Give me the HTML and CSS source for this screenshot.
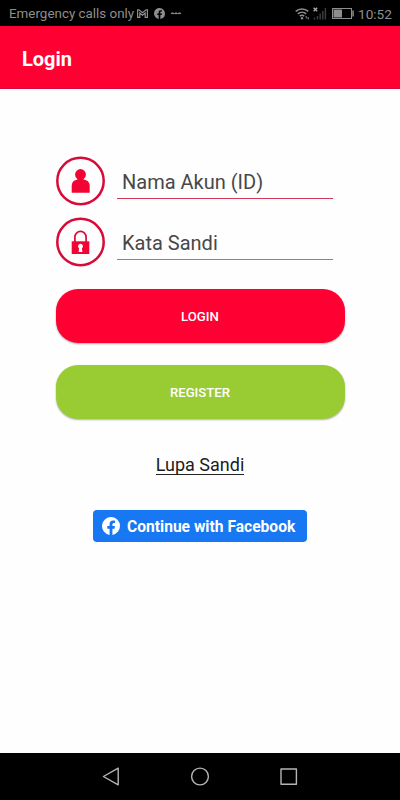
FILE: index.html
```html
<!DOCTYPE html>
<html lang="id">

<head>
    <meta charset="UTF-8">
    <meta name="viewport" content="width=device-width, initial-scale=1.0">
    <title>Login</title>
    <link rel="stylesheet" href="styles.css">
</head>

<body>
    <div class="status-bar">
        <span class="carrier">Emergency calls only</span>
        <svg class="gmail" width="11" height="9" viewBox="0 0 11 9">
            <path d="M.6 8.3V.8h1.3l3.6 3 3.6-3h1.3v7.5H8.2V4L5.5 6.2 2.8 4v4.3z" />
        </svg>
        <svg class="fb-small" width="11" height="11" viewBox="0 0 24 24">
            <path d="M24 12a12 12 0 1 0-13.9 11.9v-8.4H7.1V12h3V9.4c0-3 1.8-4.7 4.6-4.7 1.3 0 2.7.2 2.7.2v3h-1.5c-1.5 0-2 .9-2 1.9V12h3.4l-.6 3.5h-2.8v8.4A12 12 0 0 0 24 12z" />
        </svg>
        <svg class="dots" width="10" height="3" viewBox="0 0 10 3">
            <path d="M0 1.6h10M.5 1h2M4 1h2M7.5 1h2" />
        </svg>
        <svg class="wifi" width="15" height="13" viewBox="0 0 15 13">
            <path d="M.7 4.4a9.4 9.4 0 0 1 12.6 0M2.8 6.9a6.3 6.3 0 0 1 8.4 0M4.8 9.2a3.3 3.3 0 0 1 4.4 0" />
            <circle cx="7" cy="11.2" r="1.2" />
            <path class="thin" d="M11.2 9v2.5M13.2 10v2.5" />
        </svg>
        <svg class="signal" width="14" height="13" viewBox="0 0 14 13">
            <path class="bars" d="M1.5 10.5v2M4.5 9v3.5M7.2 6.5v6M9.8 4v8.5M12.4 1v11.5" />
            <path class="cross" d="M.6.7l3.6 3.6M4.2.7L.6 4.3" />
        </svg>
        <svg class="battery" width="22" height="11" viewBox="0 0 22 11">
            <rect class="case" x=".5" y=".5" width="19" height="10" />
            <rect x="1.5" y="1.5" width="8.5" height="8" />
            <rect x="20.3" y="2.5" width="1.5" height="6" />
        </svg>
        <span class="clock">10:52</span>
    </div>

    <header class="app-bar">
        <h1>Login</h1>
    </header>

    <main>
        <form class="login-form">
            <div class="field">
                <svg class="field-icon" width="49" height="50" viewBox="0 0 49 50">
                    <circle class="ring" cx="24.5" cy="25" r="23.2" />
                    <circle cx="24.5" cy="18.5" r="5.4" />
                    <path d="M21.5 21h6v2.500c3.800.6 6 2.400 6.200 6v7.200H15.700v-7.200c.2-3.600 2.300-5.400 5.800-6z" />
                </svg>
                <input class="active" type="text" placeholder="Nama Akun (ID)">
            </div>
            <div class="field">
                <svg class="field-icon" width="49" height="50" viewBox="0 0 49 50">
                    <circle class="ring" cx="24.5" cy="25" r="23.2" />
                    <path class="shackle" d="M18.900 25v-5a5.600 5.600 0 0 1 11.200 0v5" />
                    <rect x="15.700" y="24.300" width="17.600" height="12.700" />
                    <path class="keyhole" d="M24.500 26.700a2.600 2.600 0 0 1 1.400 4.700l.5 3.600h-3.800l.5-3.600a2.600 2.600 0 0 1 1.400-4.700z" />
                </svg>
                <input type="password" placeholder="Kata Sandi">
            </div>

            <button class="btn login" type="button">LOGIN</button>
            <button class="btn register" type="button">REGISTER</button>
        </form>

        <a class="forgot">Lupa Sandi</a>

        <button class="facebook" type="button">
            <svg width="18" height="18" viewBox="0 0 24 24">
                <path d="M24 12a12 12 0 1 0-13.900 11.900v-8.400H7.100V12h3V9.400c0-3 1.800-4.700 4.600-4.700 1.300 0 2.700.2 2.700.2v3h-1.500c-1.500 0-2 .9-2 1.900V12h3.400l-.6 3.500h-2.800v8.400A12 12 0 0 0 24 12z" />
            </svg>
            <span>Continue with Facebook</span>
        </button>
    </main>

    <nav class="nav-bar">
        <svg width="20" height="20" viewBox="0 0 20 20">
            <path d="M2.400 9.500L17.200 1.200v16.600z" />
        </svg>
        <svg width="20" height="20" viewBox="0 0 20 20">
            <circle cx="10" cy="9.500" r="8.400" />
        </svg>
        <svg width="20" height="20" viewBox="0 0 20 20">
            <rect x="2" y="2" width="15.400" height="15.200" />
        </svg>
    </nav>
</body>

</html>
```

FILE: styles.css
```css
* {
    box-sizing: border-box;
}

body {
    margin: 0;
    height: 100vh;
    display: flex;
    flex-direction: column;
    background-color: #fefefe;
    font-family: Roboto, sans-serif;
    overflow: hidden;
}

svg {
    display: block;
    flex: none;
}

/* phone status bar */
.status-bar {
    display: flex;
    align-items: center;
    height: 26px;
    padding: 1px 9px 0 9px;
    background-color: #000;
    color: #8e8e8e;
    fill: #8e8e8e;
    font-size: 13.4px;
    white-space: nowrap;
}

.carrier {
    width: 125px;
}

.gmail {
    margin-left: 3px;
    fill: none;
    stroke: #8e8e8e;
    stroke-width: 1.2;
}

.fb-small {
    margin-left: 6px;
}

.dots {
    margin-left: 6px;
    stroke: #8e8e8e;
}

.wifi {
    margin-left: auto;
    stroke: #8e8e8e;
    stroke-width: 1.6;
}

.wifi path {
    fill: none;
}

.wifi circle {
    stroke: none;
}

.wifi .thin {
    stroke-width: 1;
}

.signal {
    margin-left: 3px;
    fill: none;
}

.signal .bars {
    stroke: #3c3c3c;
    stroke-width: 1.5;
}

.signal .cross {
    stroke: #aaa;
    stroke-width: 1.3;
}

.battery {
    margin-left: 5px;
}

.battery .case {
    fill: none;
    stroke: #8e8e8e;
}

.clock {
    width: 33px;
    margin-left: 4px;
    font-size: 13.6px;
}

.app-bar {
    display: flex;
    align-items: center;
    height: 63px;
    padding: 3px 22px 0;
    background-color: #ff0033;
    border-bottom: 1px solid #d9083a;
    color: #fff;
}

.app-bar h1 {
    margin: 0;
    font-size: 20px;
    font-weight: 700;
}

main {
    flex: 1;
    display: flex;
    flex-direction: column;
    align-items: center;
    padding-top: 67px;
}

.login-form {
    display: flex;
    flex-direction: column;
    width: 289px;
}

.field {
    display: flex;
    gap: 12px;
    height: 50px;
    margin-bottom: 11px;
}

.field-icon {
    fill: #f20535;
}

.field-icon .ring {
    fill: none;
    stroke: #d80a38;
    stroke-width: 2.5;
}

.field-icon .shackle {
    fill: none;
    stroke: #d80a38;
    stroke-width: 1.7;
}

.field-icon .keyhole {
    fill: #fff;
}

.field input {
    width: 216px;
    height: 43px;
    padding: 10px 0 0 5.5px;
    border: none;
    border-bottom: 1px solid #858585;
    outline: none;
    background: none;
    font-family: inherit;
    font-size: 20px;
}

.field input.active {
    border-bottom-color: #d03a56;
}

.field input::placeholder {
    color: #484848;
    opacity: 1;
}

.btn {
    height: 54px;
    padding: 1px 0 0;
    border: none;
    border-radius: 22px;
    color: #fff;
    font-family: inherit;
    font-size: 13.2px;
    font-weight: 500;
    box-shadow: 0 1px 2px rgba(0, 0, 0, 0.3);
}

.login {
    margin-top: 11px;
    background-color: #ff0033;
}

.register {
    margin-top: 22px;
    background-color: #99cc33;
}

.forgot {
    margin-top: 36px;
    padding-top: 1px;
    border-bottom: 1px solid #222;
    color: #1c1c1c;
    font-size: 18px;
    line-height: 18px;
}

.facebook {
    display: flex;
    align-items: center;
    gap: 7px;
    width: 214px;
    height: 32px;
    margin-top: 35px;
    padding: 0 9px;
    border: none;
    border-radius: 4px;
    background-color: #1877f2;
    color: #fff;
    fill: #fff;
    font-family: inherit;
    font-size: 15.6px;
    font-weight: 700;
    white-space: nowrap;
}

.facebook span {
    padding-top: 1px;
}

/* android navigation buttons */
.nav-bar {
    display: flex;
    justify-content: center;
    align-items: center;
    gap: 69px;
    height: 47px;
    background-color: #000;
    fill: none;
    stroke: #b5b5b5;
    stroke-width: 1.4;
    stroke-linejoin: round;
}
```
